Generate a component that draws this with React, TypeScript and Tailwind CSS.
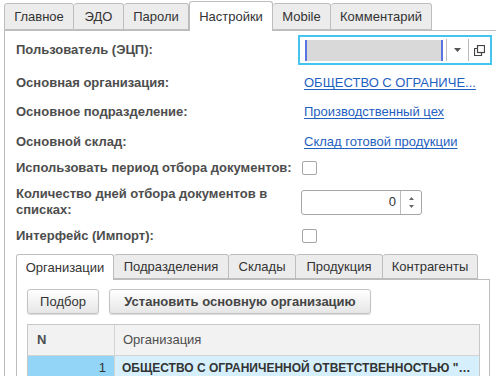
const topTabs = [
  { label: "Главное", w: "w-[70px]" },
  { label: "ЭДО", w: "w-[50px]" },
  { label: "Пароли", w: "w-[65px]" },
  { label: "Настройки", w: "w-[84px]", active: true },
  { label: "Mobile", w: "w-[58px]" },
  { label: "Комментарий", w: "w-[101px]" },
];

const innerTabs = [
  { label: "Организации", w: "w-[98px]", active: true },
  { label: "Подразделения", w: "w-[115px]" },
  { label: "Склады", w: "w-[67px]" },
  { label: "Продукция", w: "w-[87px]" },
  { label: "Контрагенты", w: "w-[95px]" },
];

function Label({ children }: { children: React.ReactNode }) {
  return (
    <div className="w-[286px] shrink-0 font-bold leading-[16px] text-[#4d4d4d]">
      {children}
    </div>
  );
}

function Link({ children }: { children: React.ReactNode }) {
  return (
    <span className="ml-[2px] text-[#1f5fbf] underline underline-offset-2">
      {children}
    </span>
  );
}

function Checkbox() {
  return (
    <div className="h-[14px] w-[15px] rounded-[2px] border border-[#a6a6a6] bg-white" />
  );
}

export default function App() {
  return (
    <div className="h-[376px] w-[496px] overflow-hidden bg-white font-['Liberation_Sans',Arial,sans-serif] text-[13px] text-[#333]">
      {/* top tabs */}
      <div className="flex h-[30px] items-end pl-[4px]">
        {topTabs.map((t) => (
          <div
            key={t.label}
            className={
              t.active
                ? `${t.w} -mb-px flex h-[30px] items-center justify-center rounded-t-[3px] border border-b-0 border-[#bdbdbd] bg-white`
                : `${t.w} flex h-[27px] items-center justify-center rounded-t-[3px] border border-l-0 border-[#bdbdbd] bg-[#ececec] first:border-l`
            }
          >
            {t.label}
          </div>
        ))}
      </div>

      <div className="ml-[4px] h-[346px] border-l border-t border-[#bdbdbd] pl-[11px]">
        {/* Пользователь */}
        <div className="mt-[4px] flex h-[30px] items-center">
          <Label>Пользователь (ЭЦП):</Label>
          <div className="-ml-[4px] flex h-[30px] w-[194px] items-center border-2 border-[#45c4ef] bg-white pl-[5px]">
            <div className="h-[21px] w-[140px] border-x-2 border-x-[#5b74e0] bg-[#d9d9d9]" />
            <div className="ml-[3px] h-[22px] w-px bg-[#bdbdbd]" />
            <div className="flex w-[21px] justify-center">
              <svg width="7" height="4" viewBox="0 0 7 4">
                <path d="M0 0h7L3.5 4z" fill="#555" />
              </svg>
            </div>
            <div className="h-[22px] w-px bg-[#bdbdbd]" />
            <div className="flex w-[21px] justify-center">
              <svg width="11" height="11" viewBox="0 0 11 11" fill="none" stroke="#444" strokeWidth="1.2">
                <rect x="3.5" y="0.5" width="7" height="7" />
                <path d="M3.5 3.5H0.5v7h7V7.5" />
              </svg>
            </div>
          </div>
        </div>

        <div className="mt-[6px] flex h-[24px] items-center">
          <Label>Основная организация:</Label>
          <Link>ОБЩЕСТВО С ОГРАНИЧЕ...</Link>
        </div>
        <div className="mt-[5px] flex h-[24px] items-center">
          <Label>Основное подразделение:</Label>
          <Link>Производственный цех</Link>
        </div>
        <div className="mt-[6px] flex h-[24px] items-center">
          <Label>Основной склад:</Label>
          <Link>Склад готовой продукции</Link>
        </div>
        <div className="mt-[2px] flex h-[24px] items-center">
          <Label>Использовать период отбора документов:</Label>
          <Checkbox />
        </div>
        <div className="mt-[6px] flex h-[32px] items-center">
          <Label>
            Количество дней отбора документов в
            <br />
            списках:
          </Label>
          <div className="-ml-px flex h-[25px] w-[121px] items-stretch rounded-[3px] border border-[#a6a6a6] bg-white">
            <div className="flex flex-1 items-center justify-end pr-[4px] text-[#333]">0</div>
            <div className="flex w-[21px] flex-col items-center justify-center gap-[5px] border-l border-[#bdbdbd]">
              <svg width="5" height="3" viewBox="0 0 5 3">
                <path d="M0 3h5L2.5 0z" fill="#666" />
              </svg>
              <svg width="5" height="3" viewBox="0 0 5 3">
                <path d="M0 0h5L2.5 3z" fill="#666" />
              </svg>
            </div>
          </div>
        </div>
        <div className="mt-[6px] flex h-[24px] items-center">
          <Label>Интерфейс (Импорт):</Label>
          <Checkbox />
        </div>

        {/* inner tabs */}
        <div className="mt-[6px] flex h-[25px] items-end">
          {innerTabs.map((t) => (
            <div
              key={t.label}
              className={
                t.active
                  ? `${t.w} -mb-px flex h-[26px] items-center justify-center rounded-t-[3px] border border-b-0 border-[#bdbdbd] bg-white`
                  : `${t.w} flex h-[25px] items-center justify-center rounded-t-[3px] border border-l-0 border-[#bdbdbd] bg-[#ececec]`
              }
            >
              {t.label}
            </div>
          ))}
        </div>
        <div className="h-[100px] w-[474px] border border-[#bdbdbd] px-[10px] pt-[9px]">
          <div className="flex gap-[10px]">
            <button className="h-[25px] w-[72px] rounded-[3px] border border-[#c2c2c2] bg-gradient-to-b from-white to-[#e6e6e6] text-[#333] shadow-[0_1px_1px_rgba(0,0,0,0.15)]">
              Подбор
            </button>
            <button className="h-[25px] w-[262px] rounded-[3px] border border-[#c2c2c2] bg-gradient-to-b from-white to-[#e6e6e6] font-bold text-[#444] shadow-[0_1px_1px_rgba(0,0,0,0.15)]">
              Установить основную организацию
            </button>
          </div>
          <div className="mt-[10px] w-[453px] border border-[#c8c8c8]">
            <div className="flex h-[31px] items-center border-b border-[#d4d4d4] bg-[#f2f2f2] text-[#4d4d4d]">
              <div className="flex h-full w-[87px] items-center border-r border-[#d4d4d4] pl-[9px] font-bold">N</div>
              <div className="pl-[8px]">Организация</div>
            </div>
            <div className="flex h-[24px] items-center">
              <div className="flex h-full w-[87px] items-center justify-end border-r border-[#d4d4d4] bg-[#92d5f6] pr-[8px] text-[#333]">1</div>
              <div className="flex h-full flex-1 items-center overflow-hidden whitespace-nowrap bg-[#d5f0fc] pl-[7px] text-[12px] font-bold text-[#333]">
                ОБЩЕСТВО С ОГРАНИЧЕННОЙ ОТВЕТСТВЕННОСТЬЮ "…
              </div>
            </div>
          </div>
        </div>
      </div>
    </div>
  );
}
